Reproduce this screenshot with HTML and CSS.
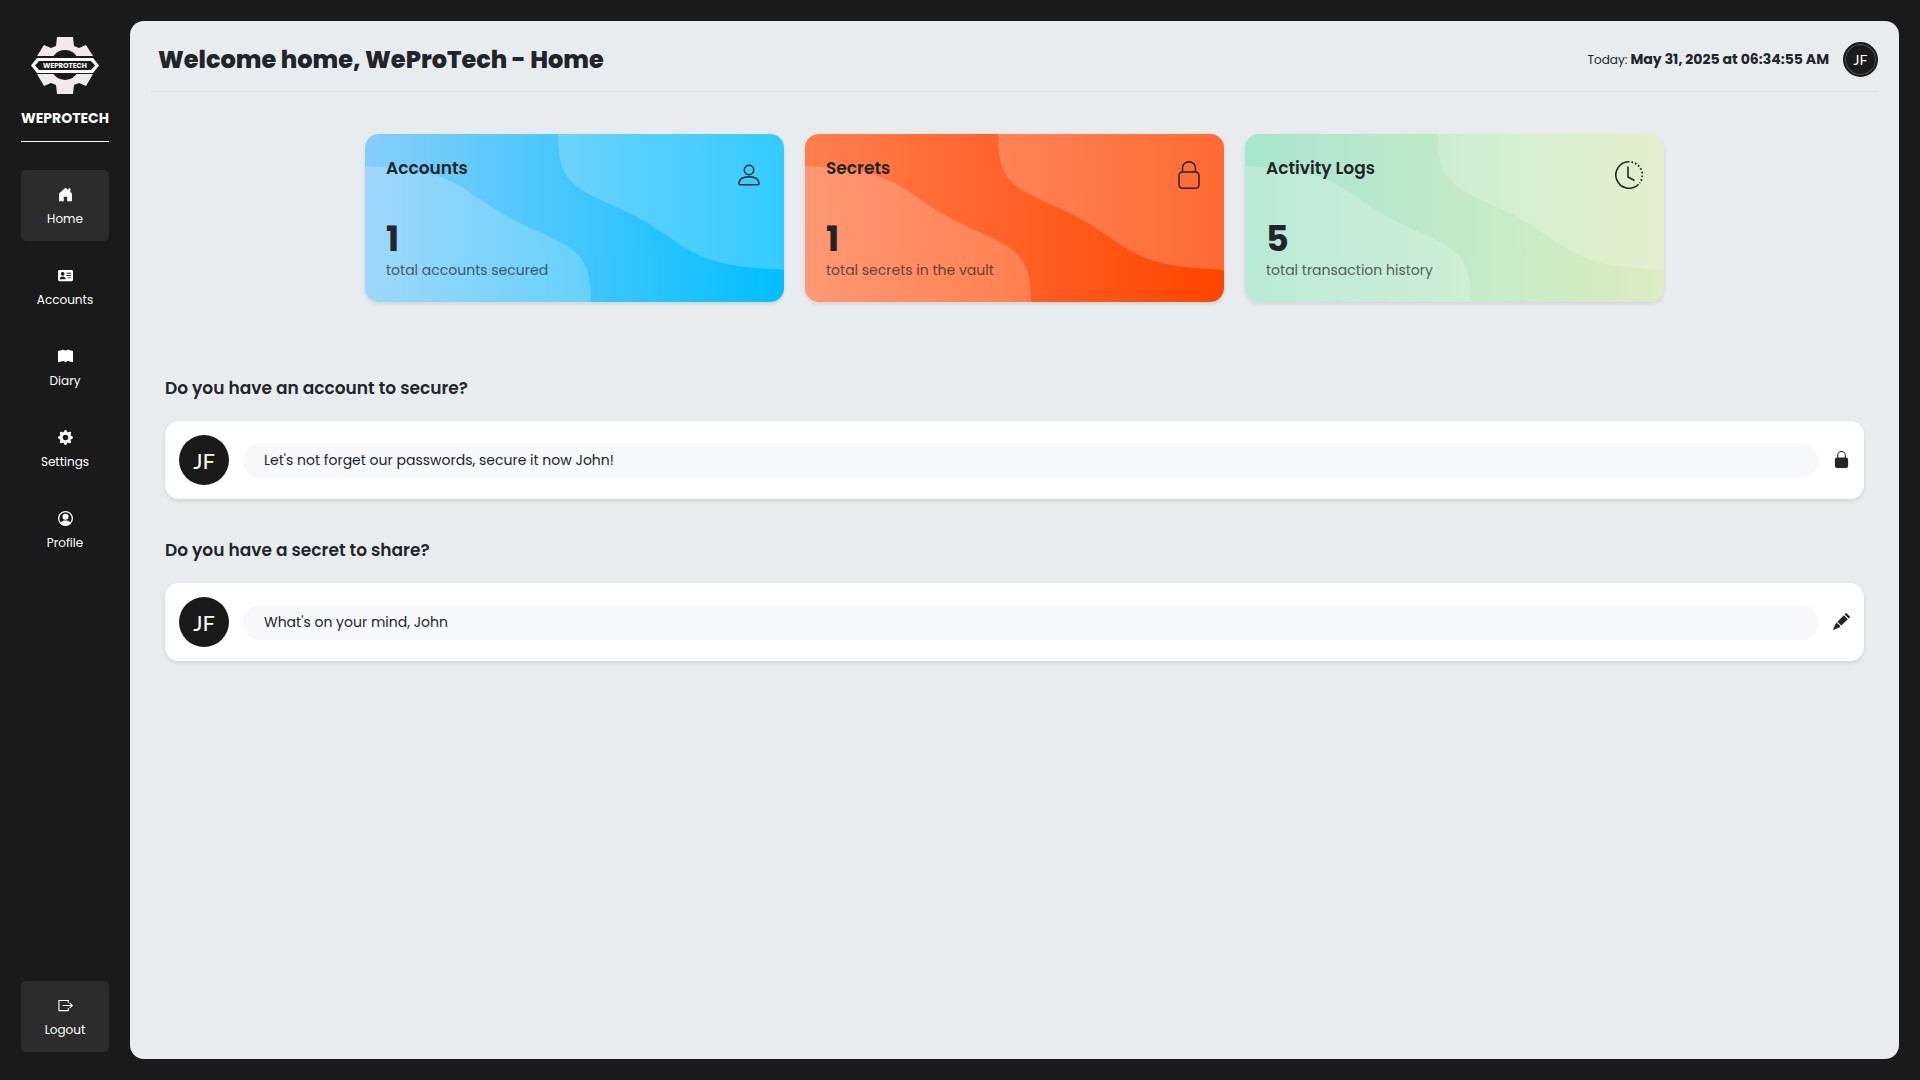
FILE: index.html
```html
<!DOCTYPE html>
<html lang="en">
<head>
<meta charset="utf-8">
<meta name="viewport" content="width=device-width, initial-scale=1">
<title>WeProTech - Home</title>
<link rel="stylesheet" href="styles.css">
</head>
<body>
<svg class="defs" aria-hidden="true">
  <symbol id="waves" viewBox="0 0 419 168" preserveAspectRatio="none">
    <path d="M193 0C193 32 199 46 222 59C238 68 256 74 272 83C304 100 315 114 341 124C361 132 385 134 419 136V0Z"/>
    <path transform="rotate(180 209.5 84)" d="M193 0C193 32 199 46 222 59C238 68 256 74 272 83C304 100 315 114 341 124C361 132 385 134 419 136V0Z"/>
  </symbol>
</svg>
<div class="app">
  <aside class="sidebar">
    <a class="brand" href="#">
      <svg class="brand-logo" viewBox="0 0 68 58" aria-hidden="true">
        <path fill="#f1eaea" d="M26 1H42L43 10L48 12L55 9L62 20H6L13 9L20 12L25 10ZM26 58H42L43 49L48 47L55 50L62 38H6L13 50L20 47L25 49Z"/>
        <ellipse cx="34" cy="29" rx="14.5" ry="15" fill="#1a1a1a"/>
        <path fill="#1a1a1a" d="M0 20H68V38H0Z"/>
        <path fill="#fff" d="M6 22H62L68 29.500L62 37H6L0 29.500Z"/>
        <path fill="#1a1a1a" d="M8 25H60L64 29.500L60 34H8L4 29.500Z"/>
        <text x="34" y="32" text-anchor="middle" class="logo-text">WEPROTECH</text>
      </svg>
      <span>WEPROTECH</span>
    </a>
    <nav class="nav">
      <a class="nav-item active" href="#">
        <svg viewBox="0 0 14 14"><path d="M7 0.6L9.8 3.1V1.2H11.6V4.7L13 6V13.4H8.6V9.2H5.4V13.4H1V6Z"/></svg>
        <span>Home</span>
      </a>
      <a class="nav-item" href="#">
        <svg viewBox="0 0 16 16"><path fill-rule="evenodd" d="M1.5 2A1.5 1.5 0 0 0 0 3.5v9A1.5 1.5 0 0 0 1.5 14h13a1.5 1.5 0 0 0 1.5-1.5v-9A1.5 1.5 0 0 0 14.500 2ZM9 5h5v1H9ZM9 7.500h5v1H9ZM10 10h4v1h-4ZM5 4.200a2 2 0 1 1 0 4 2 2 0 0 1 0-4ZM1.800 12c0-2 1.400-3 3.200-3s3.200 1 3.200 3Z"/></svg>
        <span>Accounts</span>
      </a>
      <a class="nav-item" href="#">
        <svg viewBox="0 0 16 16"><path d="M8 1.783C7.015.936 5.587.810 4.287.940 2.774 1.092 1.245 1.611.293 2.045A.5.5 0 0 0 0 2.500v11a.5.5 0 0 0 .707.455c.882-.4 2.303-.881 3.680-1.020 1.409-.142 2.590.087 3.223.877a.5.5 0 0 0 .780 0c.633-.790 1.814-1.019 3.222-.877 1.378.139 2.800.620 3.681 1.020A.5.5 0 0 0 16 13.500v-11a.5.5 0 0 0-.293-.455c-.952-.433-2.480-.952-3.994-1.105C10.413.809 8.985.936 8 1.783"/></svg>
        <span>Diary</span>
      </a>
      <a class="nav-item" href="#">
        <svg viewBox="0 0 16 16"><path d="M9.405 1.050c-.413-1.400-2.397-1.400-2.810 0l-.1.340a1.464 1.464 0 0 1-2.105.872l-.310-.170c-1.283-.698-2.686.705-1.987 1.987l.169.311c.446.820.023 1.841-.872 2.105l-.340.100c-1.400.413-1.400 2.397 0 2.810l.340.100a1.464 1.464 0 0 1 .872 2.105l-.170.310c-.698 1.283.705 2.686 1.987 1.987l.311-.169a1.464 1.464 0 0 1 2.105.872l.100.340c.413 1.400 2.397 1.400 2.810 0l.100-.340a1.464 1.464 0 0 1 2.105-.872l.310.170c1.283.698 2.686-.705 1.987-1.987l-.169-.311a1.464 1.464 0 0 1 .872-2.105l.340-.100c1.400-.413 1.400-2.397 0-2.810l-.340-.100a1.464 1.464 0 0 1-.872-2.105l.170-.310c.698-1.283-.705-2.686-1.987-1.987l-.311.169a1.464 1.464 0 0 1-2.105-.872zM8 10.930a2.929 2.929 0 1 1 0-5.860 2.929 2.929 0 0 1 0 5.858z"/></svg>
        <span>Settings</span>
      </a>
      <a class="nav-item" href="#">
        <svg viewBox="0 0 16 16"><circle cx="8" cy="8" r="7.3" fill="none" stroke="currentColor" stroke-width="1.4"/><circle cx="8" cy="6.200" r="3.200"/><path d="M2.600 12.600C3.800 10.600 5.800 10 8 10s4.200.6 5.400 2.600A7.300 7.300 0 0 1 8 15.500a7.300 7.300 0 0 1-5.400-2.900Z"/></svg>
        <span>Profile</span>
      </a>
    </nav>
    <button class="nav-item active logout" type="button">
      <svg viewBox="0 0 16 16" fill="none" stroke="currentColor" stroke-width="1.200"><path d="M11 5V2.600H1V13.400H11V11M5 8H15M12.400 5.200L15.200 8L12.400 10.800"/></svg>
      <span>Logout</span>
    </button>
  </aside>

  <main class="main">
    <header class="topbar">
      <h1>Welcome home, WeProTech - Home</h1>
      <div class="topbar-side">
        <p class="today">Today: <strong>May 31, 2025 at 06:34:55 AM</strong></p>
        <button class="avatar avatar-sm" type="button">JF</button>
      </div>
    </header>

    <section class="cards">
      <a class="card card-blue" href="#">
        <svg class="card-waves" aria-hidden="true"><use href="#waves"/></svg>
        <h2>Accounts</h2>
        <svg class="card-icon" viewBox="0 0 28 28"><circle cx="14" cy="9" r="4.700"/><path d="M4 22.500C4 18 8 15.700 14 15.700S24 18 24 22.500Q24 23.800 22.800 23.800H5.200Q4 23.800 4 22.500Z"/></svg>
        <p class="card-value">1</p>
        <p class="card-note">total accounts secured</p>
      </a>
      <a class="card card-orange" href="#">
        <svg class="card-waves" aria-hidden="true"><use href="#waves"/></svg>
        <h2>Secrets</h2>
        <svg class="card-icon" viewBox="0 0 28 28"><rect x="4" y="11" width="20" height="16.300" rx="3.500"/><path d="M7.500 11V7A6.500 6.300 0 0 1 20.500 7V11"/></svg>
        <p class="card-value">1</p>
        <p class="card-note">total secrets in the vault</p>
      </a>
      <a class="card card-green" href="#">
        <svg class="card-waves" aria-hidden="true"><use href="#waves"/></svg>
        <h2>Activity Logs</h2>
        <svg class="card-icon" viewBox="0 0 28 28"><path stroke-width="1.600" d="M14.500 .8A13.200 13.200 0 1 0 23.500 23.200M13 5.500V16L19.500 19.500"/><path stroke-width="1.800" stroke-dasharray="1.700 2" d="M16.500 1A13.200 13.200 0 0 1 24.600 22"/></svg>
        <p class="card-value">5</p>
        <p class="card-note">total transaction history</p>
      </a>
    </section>

    <section class="prompt">
      <h2><label for="account">Do you have an account to secure?</label></h2>
      <div class="prompt-row">
        <span class="avatar">JF</span>
        <input id="account" type="text" placeholder="Let's not forget our passwords, secure it now John!">
        <button class="icon-button" type="button" aria-label="Secure account">
          <svg viewBox="0 0 18 18"><rect x="2" y="7" width="14" height="11" rx="2.200"/><path fill="none" stroke="currentColor" stroke-width="1.100" d="M5 8V4.500A4 4 0 0 1 13 4.500V8"/></svg>
        </button>
      </div>
    </section>

    <section class="prompt">
      <h2><label for="secret">Do you have a secret to share?</label></h2>
      <div class="prompt-row">
        <span class="avatar">JF</span>
        <input id="secret" type="text" placeholder="What's on your mind, John">
        <button class="icon-button" type="button" aria-label="Write secret">
          <svg viewBox="0 0 18 18"><path d="M14.300 .2L17.800 3.700Q18.200 4.300 17.600 4.900L16.600 5.900L12.300 1.600L13.400 .4Q13.900 -.1 14.300 .2ZM11.500 2.400L15.700 6.600L8.800 13.300L4.700 9.200ZM3.900 10L8 14.100L6.700 15.300L.3 18L0 17.700L2.700 11.300Z"/></svg>
        </button>
      </div>
    </section>
  </main>
</div>
</body>
</html>
```
FILE: styles.css
```css
:root {
  --dark: #1a1a1a;
  --panel: #e8ecef;
  --ink: #212529;
}

* { box-sizing: border-box; }

body {
  margin: 0;
  background: var(--dark);
  color: var(--ink);
  font-family: Poppins, Inter, sans-serif;
  font-size: 14px;
  line-height: 21px;
}

h1, h2, p { margin: 0; }
a { color: inherit; text-decoration: none; }
button, input { border: 0; padding: 0; font: inherit; color: inherit; background: none; }

.defs { position: absolute; width: 0; height: 0; }

.app { display: flex; min-height: 100vh; }

/* Sidebar */
.sidebar {
  display: flex;
  flex-direction: column;
  width: 130px;
  padding: 36px 21px 28px;
  color: #fff;
}

.brand {
  display: flex;
  flex-direction: column;
  align-items: center;
  gap: 14px;
  padding-bottom: 12px;
  margin-bottom: 28px;
  border-bottom: 1px solid #fff;
  font-weight: 700;
}
.brand-logo { width: 68px; height: 58px; }
.logo-text { fill: #fff; font-size: 7px; font-weight: 700; }

.nav { display: flex; flex-direction: column; gap: 10px; }

.nav-item {
  display: flex;
  flex-direction: column;
  align-items: center;
  justify-content: center;
  gap: 6px;
  height: 71px;
  padding-top: 4px;
  border-radius: 5px;
  font-size: 12px;
}
.nav-item svg { width: 15px; height: 15px; fill: currentColor; }
.nav-item.active { background: #2c2c2c; }
.logout { margin-top: auto; cursor: pointer; }
.nav-item.logout svg { fill: none; }

/* Main panel */
.main {
  flex: 1;
  margin: 21px 21px 21px 0;
  padding: 0 21px;
  border-radius: 14px;
  background: var(--panel);
}

.topbar {
  display: flex;
  align-items: center;
  justify-content: space-between;
  padding: 21px 0 14px 7px;
  border-bottom: 1px solid #dadfe2;
}
.topbar h1 { font-size: 24px; line-height: 35px; font-weight: 800; }
.topbar-side { display: flex; align-items: center; gap: 14px; }
.today { font-size: 12px; }
.today strong { font-size: 14px; }

.avatar {
  display: flex;
  flex: none;
  align-items: center;
  justify-content: center;
  width: 50px;
  height: 50px;
  border-radius: 50%;
  background: var(--dark);
  color: #fff;
  font-family: Lato, sans-serif;
  font-size: 22px;
}
.avatar-sm {
  width: 35px;
  height: 35px;
  border: 2px solid var(--dark);
  box-shadow: inset 0 0 0 1px #55585b;
  font-size: 14px;
}

/* Summary cards */
.cards {
  display: grid;
  grid-template-columns: repeat(3, 1fr);
  gap: 21px;
  width: 75%;
  min-width: 1299px;
  margin: 42px auto 70px;
}
.card {
  position: relative;
  display: grid;
  grid-template-columns: 1fr auto;
  grid-template-rows: 1fr 42px 21px;
  min-height: 168px;
  padding: 21px;
  border-radius: 14px;
  box-shadow: 0 2px 4px rgba(0, 0, 0, .1);
  overflow: hidden;
}
.card > * { position: relative; }
.card .card-waves {
  position: absolute;
  inset: 0;
  width: 100%;
  height: 100%;
  fill: #fff;
  opacity: .2;
}
.card h2 { font-size: 17px; line-height: 26px; font-weight: 600; }
.card-icon {
  width: 28px;
  height: 28px;
  margin-top: 6px;
  fill: none;
  stroke: currentColor;
  stroke-width: 1.5;
}
.card-value { grid-column: 1 / -1; font-size: 35px; line-height: 42px; font-weight: 700; }
.card-note { grid-column: 1 / -1; font-size: 14px; opacity: .7; }
.card-blue { background: linear-gradient(90deg, #87cefa, #00bfff); }
.card-orange { background: linear-gradient(90deg, #ff7f50, #ff4500); }
.card-green { background: linear-gradient(90deg, #a8e6cf, #dcedc1); }

/* Prompts */
.prompt { padding: 0 14px; margin-bottom: 35px; }
.prompt h2 { margin-bottom: 16px; font-size: 17px; line-height: 33px; font-weight: 600; }
.prompt-row {
  display: flex;
  align-items: center;
  gap: 14px;
  padding: 14px;
  border-radius: 14px;
  background: #fff;
  box-shadow: 0 2px 4px rgba(0, 0, 0, .1);
}
.prompt-row input {
  flex: 1;
  min-width: 0;
  height: 35px;
  padding: 0 21px;
  border-radius: 18px;
  background: #f8f9fb;
  font-size: 14px;
}
.prompt-row input::placeholder { color: var(--ink); opacity: 1; }
.icon-button { display: flex; padding-bottom: 2px; cursor: pointer; }
.icon-button svg { width: 17px; height: 17px; fill: currentColor; }
```
